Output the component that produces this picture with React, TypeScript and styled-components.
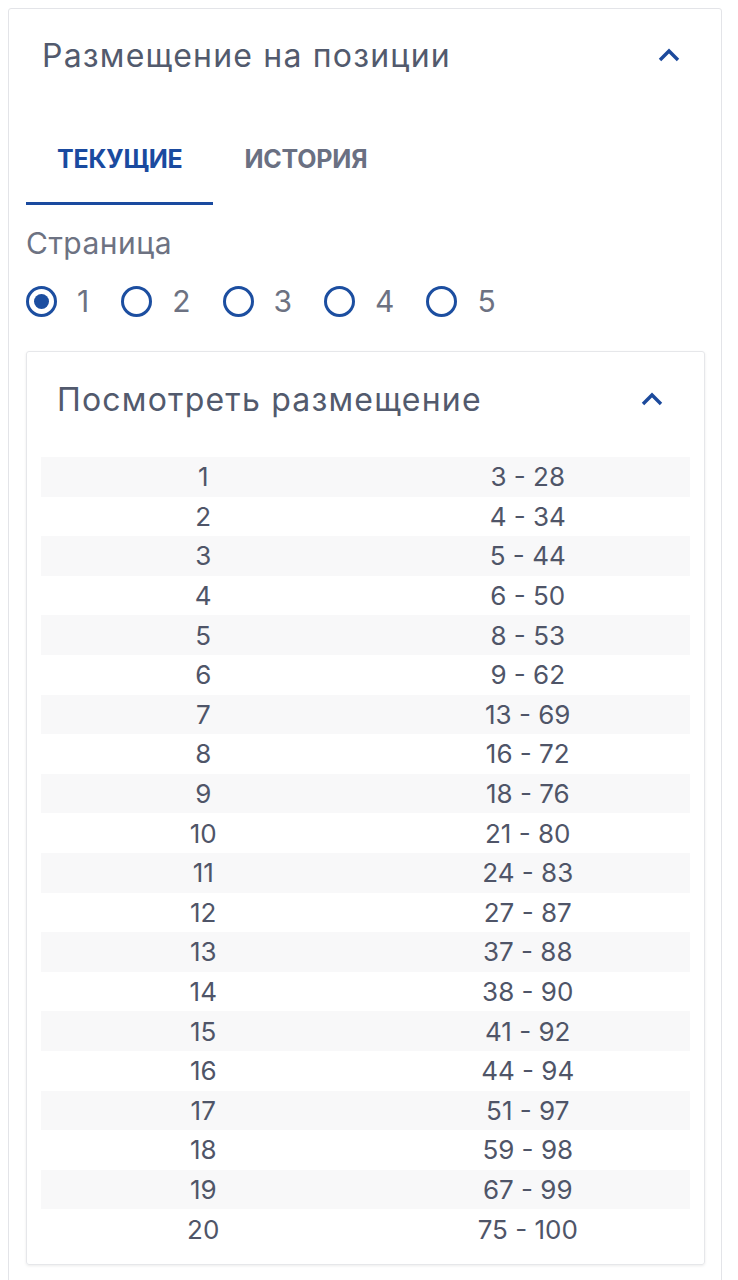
import React from "react";
import styled, { createGlobalStyle } from "styled-components";

const Global = createGlobalStyle`
  html, body { margin: 0; padding: 0; background: #ffffff; }
  body { font-family: Inter, Roboto, "Noto Sans", Arial, sans-serif; height: 1280px; overflow: hidden; }
`;

const Card = styled.section`
  margin: 8px 16px 0 8px;
  border: 1px solid #e3e4e8;
  border-radius: 3px;
  padding-bottom: 40px;
`;

const Header = styled.div<{ $h: number; $pl: number; $pr: number }>`
  height: ${(p) => p.$h}px;
  display: flex;
  align-items: center;
  justify-content: space-between;
  padding: 0 ${(p) => p.$pr}px 0 ${(p) => p.$pl}px;
`;

const Title = styled.h2`
  margin: 0;
  font-size: 32px;
  font-weight: 400;
  letter-spacing: 1.2px;
  color: #525a6d;
`;

const Chevron = () => (
  <svg width="22" height="14" viewBox="0 0 22 14">
    <polyline points="2,12 11,3 20,12" fill="none" stroke="#1c4a9c" strokeWidth="3.4" />
  </svg>
);

const Content = styled.div`
  padding: 0 16px 0 17px;
`;

const Tabs = styled.div`
  display: flex;
`;

const Tab = styled.div<{ $active?: boolean }>`
  padding: 46px 31px 31px;
  line-height: 24px;
  font-size: 25px;
  font-weight: 700;
  letter-spacing: -0.2px;
  color: ${(p) => (p.$active ? "#1a4a9f" : "#6a7082")};
  border-bottom: 3px solid ${(p) => (p.$active ? "#1a4a9f" : "transparent")};
`;

const Label = styled.div`
  margin-top: 22px;
  line-height: 32px;
  font-size: 30px;
  letter-spacing: 0.5px;
  color: #6d7282;
`;

const Radios = styled.div`
  margin-top: 26px;
  display: flex;
  gap: 32px;
  height: 32px;
  align-items: center;
`;

const RadioItem = styled.label`
  display: flex;
  align-items: center;
  gap: 20px;
  font-size: 30px;
  color: #6d7282;
`;

const Circle = styled.span<{ $checked?: boolean }>`
  width: 31px;
  height: 31px;
  box-sizing: border-box;
  border: 3px solid #1c4ea0;
  border-radius: 50%;
  display: flex;
  align-items: center;
  justify-content: center;
  &::after {
    content: "";
    width: 15px;
    height: 15px;
    border-radius: 50%;
    background: ${(p) => (p.$checked ? "#1c4ea0" : "transparent")};
  }
`;

const InnerCard = styled.div`
  margin-top: 34px;
  border: 1px solid #e6e7ea;
  border-radius: 3px;
  box-shadow: 0 1px 3px rgba(0, 0, 0, 0.08);
  padding: 0 14px 15px;
`;

const Table = styled.div`
  margin-top: 11px;
`;

const Row = styled.div<{ $striped: boolean }>`
  height: 39.6px;
  display: grid;
  grid-template-columns: 1fr 1fr;
  align-items: center;
  background: ${(p) => (p.$striped ? "#f8f8f9" : "transparent")};
`;

const Cell = styled.div`
  text-align: center;
  font-size: 26px;
  color: #4f5568;
`;

const rows: [number, string][] = [
  [1, "3 - 28"], [2, "4 - 34"], [3, "5 - 44"], [4, "6 - 50"], [5, "8 - 53"],
  [6, "9 - 62"], [7, "13 - 69"], [8, "16 - 72"], [9, "18 - 76"], [10, "21 - 80"],
  [11, "24 - 83"], [12, "27 - 87"], [13, "37 - 88"], [14, "38 - 90"], [15, "41 - 92"],
  [16, "44 - 94"], [17, "51 - 97"], [18, "59 - 98"], [19, "67 - 99"], [20, "75 - 100"],
];

export default function App() {
  return (
    <>
      <Global />
      <Card>
        <Header $h={92} $pl={33} $pr={41}>
          <Title>Размещение на позиции</Title>
          <Chevron />
        </Header>
        <Content>
          <Tabs>
            <Tab $active>ТЕКУЩИЕ</Tab>
            <Tab>ИСТОРИЯ</Tab>
          </Tabs>
          <Label>Страница</Label>
          <Radios>
            {[1, 2, 3, 4, 5].map((n) => (
              <RadioItem key={n}>
                <Circle $checked={n === 1} />
                {n}
              </RadioItem>
            ))}
          </Radios>
          <InnerCard>
            <Header $h={94} $pl={16} $pr={27}>
              <Title>Посмотреть размещение</Title>
              <Chevron />
            </Header>
            <Table>
              {rows.map(([a, b], i) => (
                <Row key={a} $striped={i % 2 === 0}>
                  <Cell>{a}</Cell>
                  <Cell>{b}</Cell>
                </Row>
              ))}
            </Table>
          </InnerCard>
        </Content>
      </Card>
    </>
  );
}
